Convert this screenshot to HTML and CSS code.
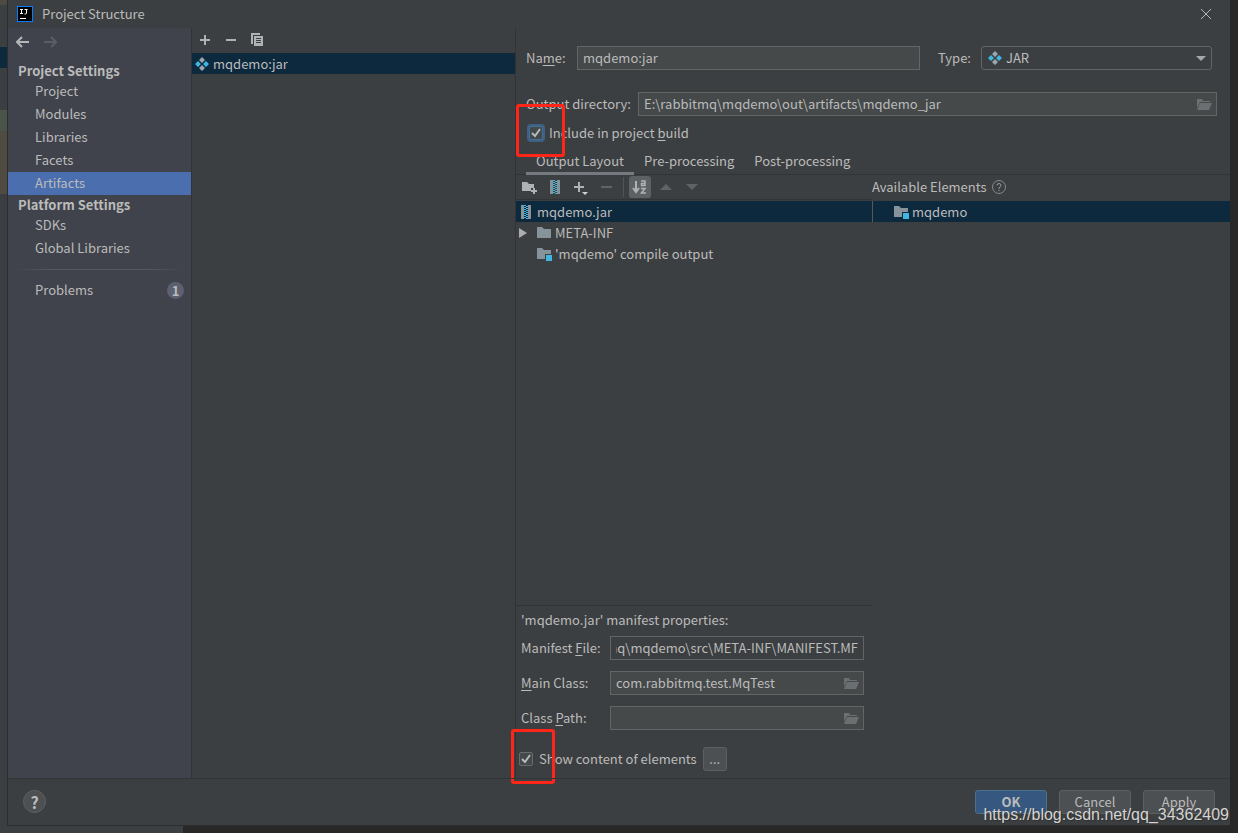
FILE: index.html
```html
<!DOCTYPE html>
<html lang="en">
<head>
<meta charset="utf-8">
<title>Project Structure</title>
<link rel="stylesheet" href="styles.css">
</head>
<body>
<svg class="defs" aria-hidden="true">
  <symbol id="artifact" viewBox="0 0 14 14">
    <path fill="#9aa7b0" d="M7 0l3 3-3 3-3-3zM7 8l3 3-3 3-3-3z"/>
    <path fill="#40b6e0" d="M3 4l3 3-3 3-3-3zM11 4l3 3-3 3-3-3z"/>
  </symbol>
  <symbol id="archive" viewBox="0 0 16 16">
    <path fill="#87939a" d="M3 1h3v14H3zM10 1h3v14h-3z"/>
    <path fill="#40b6e0" d="M6 1h2v1H6zM8 2h2v1H8zM6 3h2v1H6zM8 4h2v1H8zM6 5h2v1H6zM8 6h2v1H8zM6 7h2v1H6zM8 8h2v1H8zM6 9h2v1H6zM8 10h2v1H8zM6 11h2v1H6zM8 12h2v1H8zM6 13h2v1H6zM8 14h2v1H8z"/>
  </symbol>
  <symbol id="folder" viewBox="0 0 16 16">
    <path fill="#87939a" d="M1 2h5l2 2h7v9H1z"/>
  </symbol>
  <symbol id="module" viewBox="0 0 16 16">
    <path fill="#87939a" d="M1 2h5l2 2h7v4H9v5H1z"/>
    <path fill="#40b6e0" d="M10 9h6v6h-6z"/>
  </symbol>
  <symbol id="open-folder" viewBox="0 0 16 16">
    <path fill="#6a7072" d="M1 3h5l1 2h7v1H4L1 12zM4 7h12l-3 7H1z"/>
  </symbol>
  <symbol id="check" viewBox="0 0 14 14">
    <path fill="none" stroke="#b8babc" stroke-width="2" d="M3 7l3 3 5-7"/>
  </symbol>
</svg>
<div class="desktop">
  <div class="editor-edge"><i class="mark brown first"></i><i class="mark navy"></i><i class="mark green"></i><i class="mark brown long"></i></div>
  <main class="dialog">
    <header class="titlebar">
      <svg class="logo" viewBox="0 0 16 16"><path fill="#087cfa" d="M0 0h16v16H0z"/><path d="M1 1h14v14H1z"/><path fill="none" stroke="#fff" d="M3 3.500h3M4.500 3v5M3 7.500h3M7.500 3.500h3M9.500 3v4q0 1-1 1h-1M3 12.500h6"/></svg>
      <h1>Project Structure</h1>
      <button class="bare close" aria-label="Close"><svg viewBox="0 0 12 12" width="12" height="12"><path stroke="#b4b6b7" d="M1 1l10 10M11 1L1 11"/></svg></button>
    </header>
    <div class="body">
      <nav class="sidebar">
        <div class="history">
          <button class="bare" aria-label="Back"><svg width="14" height="12" viewBox="0 0 14 12"><path fill="none" stroke="#b4b6b8" stroke-width="2" d="M13 6H2M6 1L1 6l5 5"/></svg></button>
          <button class="bare" aria-label="Forward" disabled><svg width="14" height="12" viewBox="0 0 14 12"><path fill="none" stroke="#5a5d61" stroke-width="2" d="M1 6h11M8 1l5 5-5 5"/></svg></button>
        </div>
        <h2>Project Settings</h2>
        <a href="#">Project</a>
        <a href="#">Modules</a>
        <a href="#">Libraries</a>
        <a href="#">Facets</a>
        <a href="#" class="active">Artifacts</a>
        <h2>Platform Settings</h2>
        <a href="#">SDKs</a>
        <a href="#">Global Libraries</a>
        <hr>
        <a href="#">Problems<span class="badge">1</span></a>
      </nav>
      <section class="artifacts">
        <div class="list-tools">
          <button class="bare" aria-label="Add"><svg width="16" height="16" viewBox="0 0 16 16"><path stroke="#afb1b3" stroke-width="2" d="M3 8h10M8 3v10"/></svg></button>
          <button class="bare" aria-label="Remove"><svg width="16" height="16" viewBox="0 0 16 16"><path stroke="#afb1b3" stroke-width="2" d="M3 8h10"/></svg></button>
          <button class="bare" aria-label="Copy"><svg width="16" height="16" viewBox="0 0 16 16"><path fill="#afb1b3" d="M2 1h9v2H4v9H2z"/><path fill="#afb1b3" d="M5 4h9v10H5z"/><path stroke="#3c3f41" d="M7 6.500h5M7 8.500h5M7 10.500h5"/></svg></button>
        </div>
        <div class="artifact-row"><svg class="i14"><use href="#artifact"/></svg>mqdemo:jar</div>
      </section>
      <section class="details">
        <div class="form">
          <div class="line">
            <label for="name" class="name-label">Na<u>m</u>e:</label>
            <input id="name" class="field grow" value="mqdemo:jar">
            <label for="type" class="type-label">Type:</label>
            <span class="select"><svg class="i14"><use href="#artifact"/></svg><select id="type"><option>JAR</option></select><svg class="arrow" viewBox="0 0 10 6"><path fill="#a5a7a8" d="M0 0h10L5 5z"/></svg></span>
          </div>
          <div class="line output">
            <label for="dir" class="dir-label">Output directory:</label>
            <span class="browse grow"><input id="dir" class="field" value="E:\rabbitmq\mqdemo\out\artifacts\mqdemo_jar"><button class="bare" aria-label="Browse output directory"><svg class="i16"><use href="#open-folder"/></svg></button></span>
          </div>
          <div class="check-line build">
            <span class="box focus"><input type="checkbox" id="include" checked><svg><use href="#check"/></svg></span>
            <label for="include">Include in project <u>b</u>uild</label>
            <i class="callout"></i>
          </div>
        </div>
        <div class="tabs" role="tablist">
          <button role="tab" aria-selected="true">Output Layout</button>
          <button role="tab">Pre-processing</button>
          <button role="tab">Post-processing</button>
        </div>
        <div class="panes">
          <div class="layout">
            <div class="tools">
              <button class="bare" aria-label="New folder"><svg class="i16" viewBox="0 0 16 16"><path fill="#afb1b3" d="M1 3h5l2 2h5v4h-3v3H1z"/><path stroke="#afb1b3" stroke-width="2" d="M10 12h6M13 9v6"/></svg></button>
              <button class="bare" aria-label="New archive"><svg class="i16"><use href="#archive"/></svg></button>
              <button class="bare" aria-label="Add copy of"><svg class="i16" viewBox="0 0 16 16"><path stroke="#afb1b3" stroke-width="2" d="M1 8h10M6 3v10"/><path fill="#d0d1d2" d="M9 13h6l-3 3z"/></svg></button>
              <button class="bare" aria-label="Remove element" disabled><svg class="i16" viewBox="0 0 16 16"><path stroke="#606263" stroke-width="2" d="M2 8h11"/></svg></button>
              <i class="separator"></i>
              <button class="bare sort" aria-label="Sort elements"><svg class="i16" viewBox="0 0 16 16"><path fill="none" stroke="#afb1b3" stroke-width="2" d="M4 2v10M1 9l3 4 3-4"/><path fill="none" stroke="#afb1b3" stroke-width="1.500" d="M9 2h4v5M13 4.500H9.500v2H13M9 9.500h4L9.500 14H14"/></svg></button>
              <button class="bare" aria-label="Move up" disabled><svg class="i16" viewBox="0 0 16 16"><path fill="#606263" d="M2 11h12L8 5z"/></svg></button>
              <button class="bare" aria-label="Move down" disabled><svg class="i16" viewBox="0 0 16 16"><path fill="#606263" d="M2 5h12l-6 6z"/></svg></button>
            </div>
            <div class="tree" role="tree">
              <div class="node selected" role="treeitem"><svg class="i16"><use href="#archive"/></svg>mqdemo.jar</div>
              <div class="node child" role="treeitem"><svg class="twisty" viewBox="0 0 8 10"><path fill="#adadad" d="M0 0l8 5-8 5z"/></svg><svg class="i16"><use href="#folder"/></svg>META-INF</div>
              <div class="node child" role="treeitem"><span class="twisty"></span><svg class="i16"><use href="#module"/></svg>'mqdemo' compile output</div>
            </div>
            <div class="manifest">
              <h3>'mqdemo.jar' manifest properties:</h3>
              <div class="prop"><label for="mf">Manifest <u>F</u>ile:</label><input id="mf" class="field plain tail" readonly value="E:\rabbitmq\mqdemo\src\META-INF\MANIFEST.MF"></div>
              <div class="prop"><label for="main"><u>M</u>ain Class:</label><span class="browse"><input id="main" class="field" value="com.rabbitmq.test.MqTest"><button class="bare" aria-label="Browse main class"><svg class="i16"><use href="#open-folder"/></svg></button></span></div>
              <div class="prop"><label for="cp">Class <u>P</u>ath:</label><span class="browse"><input id="cp" class="field"><button class="bare" aria-label="Browse class path"><svg class="i16"><use href="#open-folder"/></svg></button></span></div>
            </div>
          </div>
          <div class="available">
            <div class="available-head">Available Elements <svg class="i14" viewBox="0 0 14 14"><circle cx="7" cy="7" r="6.500" fill="none" stroke="#87898a"/><path fill="none" stroke="#9a9c9d" d="M5 5.500q0-2 2-2t2 2q0 1-2 2.500V9M7 10v1"/></svg></div>
            <div class="node selected"><svg class="i16"><use href="#module"/></svg>mqdemo</div>
          </div>
        </div>
        <div class="check-line show">
          <span class="box"><input type="checkbox" id="show" checked><svg><use href="#check"/></svg></span>
          <label for="show">Show content of elements</label>
          <button class="more">...</button>
          <i class="callout"></i>
        </div>
      </section>
    </div>
    <footer class="footer">
      <button class="help" aria-label="Help">?</button>
      <button class="btn primary">OK</button>
      <button class="btn">Cancel</button>
      <button class="btn">Apply</button>
      <span class="watermark">https://blog.csdn.net/qq_34362409</span>
    </footer>
  </main>
  <div class="under"></div>
</div>
</body>
</html>
```
FILE: styles.css
```css
* { box-sizing: border-box; }
body {
  margin: 0;
  background: #282828;
  color: #bbbbbb;
  font: 13px/20px "Noto Sans CJK SC", "Noto Sans", sans-serif;
}
h1, h2, h3 { margin: 0; font: inherit; }
button, input, select { font: inherit; color: inherit; margin: 0; }
svg { display: block; flex: none; }
u { text-underline-offset: 2px; }
.defs { position: absolute; width: 0; height: 0; }
.i14 { width: 14px; height: 14px; }
.i16 { width: 16px; height: 16px; }
.bare { display: flex; padding: 0; border: 0; background: none; }
.grow { flex: 1; min-width: 0; }

.desktop {
  display: grid;
  grid-template: minmax(0, 1fr) 7px / 7px minmax(0, 1fr);
  min-height: 100vh;
  padding-right: 8px;
}
.editor-edge { background: #3c3f41; display: flex; flex-direction: column; }
.mark { height: 21px; }
.brown { background: #4f4b41; }
.first { height: 5px; margin-bottom: 42px; }
.navy { background: #0d293e; margin-bottom: 42px; }
.green { background: #49544a; }
.long { height: 63px; }
.under { grid-column: 1 / 3; width: 183px; background: #3c3f41; }

.dialog {
  display: flex;
  flex-direction: column;
  background: #3c3f41;
  border-left: 1px solid #2b2d2e;
  border-bottom: 1px solid #2b2d2e;
}
.titlebar { display: flex; align-items: center; height: 28px; padding: 0 18px 0 9px; }
.logo { width: 16px; height: 16px; margin-right: 9px; }
.close { margin-left: auto; }
.body { flex: 1; display: flex; min-height: 0; }

.sidebar { width: 184px; flex: none; background: #40434c; border-right: 1px solid #313335; }
.history { display: flex; gap: 13px; padding: 8px 8px 13px; }
.sidebar h2 { height: 19px; padding-left: 10px; font-weight: bold; line-height: 19px; }
.sidebar a {
  display: flex;
  align-items: center;
  height: 23px;
  padding: 0 7px 1px 27px;
  color: inherit;
  text-decoration: none;
}
.sidebar .active { background: #4b6eaf; }
.sidebar hr { height: 1px; margin: 9px 8px; border: 0; background: linear-gradient(90deg, transparent, #55585a 20%, #55585a 80%, transparent); }
.badge {
  width: 17px;
  height: 17px;
  margin-left: auto;
  border-radius: 9px;
  background: #5c6070;
  font-weight: bold;
  line-height: 17px;
  text-align: center;
}

.artifacts { width: 324px; flex: none; border-right: 1px solid #313335; }
.list-tools { display: flex; gap: 10px; height: 25px; padding: 4px 5px; }
.artifact-row { display: flex; align-items: center; gap: 4px; height: 21px; padding-left: 3px; background: #0d293e; }

.details { flex: 1; min-width: 0; display: flex; flex-direction: column; }
.form { padding: 18px 13px 0 10px; }
.line { display: flex; align-items: center; height: 24px; padding-right: 5px; }
.name-label { width: 51px; }
.type-label { width: 61px; padding-left: 18px; }
.dir-label { width: 112px; }
.field {
  width: 100%;
  height: 24px;
  padding: 0 5px 2px;
  border: 1px solid #646464;
  border-radius: 0;
  outline: 0;
  background: #45494a;
}
.plain { background: #3c3f41; }
.tail { direction: rtl; text-align: right; }
.select { position: relative; width: 231px; }
.select select { display: block; width: 100%; height: 24px; padding: 0 24px; border: 1px solid #646464; border-radius: 3px; background: #3c3f41; appearance: none; outline: 0; }
.select svg { position: absolute; top: 5px; left: 7px; }
.select .arrow { top: 10px; left: auto; right: 6px; width: 10px; height: 6px; }
.output { margin-top: 22px; padding-right: 0; }
.browse { position: relative; display: block; width: 100%; }
.browse .field { display: block; padding-right: 26px; }
.browse .bare { position: absolute; top: 4px; right: 5px; }

.check-line { position: relative; display: flex; align-items: center; }
.build { gap: 6px; height: 34px; }
.box { position: relative; width: 14px; height: 14px; }
.box input { display: block; width: 14px; height: 14px; border: 1px solid #6b6b6b; border-radius: 2px; background: #43494a; appearance: none; outline: 0; }
.box svg { position: absolute; top: 0; left: 0; width: 14px; height: 14px; pointer-events: none; }
.focus { margin: 0 0 0 3px; }
.focus input { border-color: #466d94; box-shadow: 0 0 0 2px #3d6185; }
.callout { position: absolute; top: -12px; left: -10px; width: 49px; height: 53px; border: 3px solid #ff2518; border-radius: 3px; pointer-events: none; }
.show .callout { left: -5px; width: 44px; height: 55px; }

.tabs { display: flex; height: 25px; padding-left: 10px; border-bottom: 1px solid #313335; }
.tabs button { height: 25px; padding: 0 10px; border: 0; border-bottom: 3px solid transparent; background: none; }
.tabs [aria-selected="true"] { width: 108px; border-color: #747a80; }

.panes { flex: 1; display: flex; }
.layout { flex: 1 1 356px; display: flex; flex-direction: column; min-width: 0; }
.available { flex: 1 1 358px; min-width: 0; }
.tools { display: flex; align-items: center; gap: 10px; height: 25px; padding-left: 5px; border-bottom: 1px solid #313335; }
.separator { width: 1px; height: 20px; margin: 0 -5px 0 -2px; background: #515355; }
.sort { margin-right: -3px; padding: 3px; border-radius: 3px; background: #5c6164; }
.tree { flex: 1; padding-top: 1px; border-bottom: 1px solid #313335; }
.node { display: flex; align-items: center; gap: 3px; height: 21px; padding-left: 2px; }
.selected { background: #0d293e; }
.node.child { padding-left: 3px; }
.twisty { width: 8px; height: 10px; margin-right: 6px; }
.available-head { display: flex; align-items: center; gap: 5px; height: 26px; padding-bottom: 2px; }
.available .node { padding-left: 20px; border-left: 1px solid #55585a; }

.manifest { padding: 4px 8px 0 5px; }
.manifest h3 { margin-bottom: 6px; }
.prop { display: grid; grid-template-columns: 89px minmax(0, 1fr); align-items: center; height: 24px; margin-bottom: 11px; }
.show { height: 37px; gap: 6px; padding: 0 0 2px 3px; }
.more { width: 24px; height: 24px; padding: 0; border: 1px solid #5e6060; border-radius: 3px; background: #4c5052; }

.footer { position: relative; display: flex; gap: 12px; height: 47px; padding: 11px 15px 0; border-top: 1px solid #313335; }
.help { width: 23px; height: 23px; margin-right: auto; padding: 0; border: 1px solid #5e6060; border-radius: 12px; background: #4c5052; font-size: 16px; font-weight: bold; line-height: 20px; }
.btn { width: 72px; height: 24px; padding: 0; border: 1px solid #5e6060; border-radius: 3px; background: #4c5052; }
.primary { border-color: #4c708c; background: #365880; font-weight: bold; }
.watermark { position: absolute; right: 1px; bottom: 0; color: #d4d4d4; font: 16px/20px "Liberation Sans", Arial, sans-serif; text-shadow: 1px 1px 1px #303030; }
```
